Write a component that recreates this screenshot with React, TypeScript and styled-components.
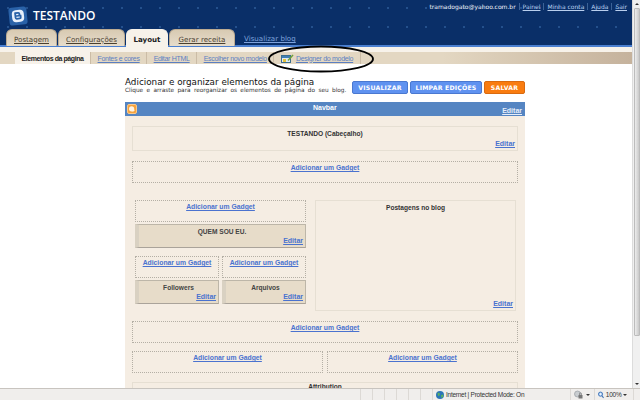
import React from 'react';
import styled, { createGlobalStyle } from 'styled-components';

const GlobalStyle = createGlobalStyle`
  html, body {
    margin: 0;
    padding: 0;
    width: 640px;
    height: 400px;
    overflow: hidden;
    background: #fff;
    font-family: 'Liberation Sans', Arial, sans-serif;
  }
`;

const Window = styled.div`
  width: 640px;
  height: 400px;
  position: relative;
  display: flex;
  flex-direction: column;
  overflow: hidden;
`;
const Body = styled.div`
  flex: 1;
  min-height: 0;
  display: flex;
`;
const Page = styled.div`
  flex: 1;
  min-width: 0;
  display: flex;
  flex-direction: column;
  overflow: hidden;
`;
const Header = styled.header`
  height: 45px;
  flex: none;
  position: relative;
  background-color: #0a2f68;
  background-image: radial-gradient(circle at 8px 8px, #24508c 1px, transparent 1.5px);
  background-size: 19px 19px;
  border-bottom: 2px solid #4a7fd0;
  display: flex;
  justify-content: space-between;
  align-items: flex-start;
`;
const Brand = styled.div`
  display: flex;
  align-items: center;
  gap: 5px;
  padding: 6px 0 0 8px;
  color: #fff;
  font: 600 12px 'Open Sans', sans-serif;
  line-height: 20px;
`;
const Account = styled.div`
  display: flex;
  align-items: center;
  gap: 3px;
  padding: 3px 5px 0 0;
  font: 6px 'DejaVu Sans', sans-serif;
  color: #eef2f8;
`;
const AccountLink = styled.a`
  color: #b9cfee;
  text-decoration: underline;
  padding-left: 3px;
  border-left: 1px solid #3c6297;
`;
const Tabs = styled.nav`
  position: absolute;
  left: 6px;
  bottom: -2px;
  display: flex;
  align-items: flex-end;
  gap: 1px;
`;
const Tab = styled.div<{ $w: number; $active?: boolean }>`
  width: ${p => p.$w}px;
  height: ${p => (p.$active ? 18 : 17)}px;
  box-sizing: border-box;
  padding-top: 2px;
  display: flex;
  align-items: center;
  justify-content: center;
  border-radius: 6px 6px 0 0;
  background: ${p => (p.$active ? '#f7f2ea' : 'linear-gradient(#d8cab2, #e6dccb)')};
  border: 1px solid ${p => (p.$active ? '#f7f2ea' : '#bcab92')};
  border-bottom: 0;
  margin-bottom: ${p => (p.$active ? 0 : 1)}px;
  color: ${p => (p.$active ? '#222' : '#4a4030')};
  font: ${p => (p.$active ? 'bold 7.1px' : '7.1px')} 'DejaVu Sans', sans-serif;
  text-decoration: ${p => (p.$active ? 'none' : 'underline')};
`;
const BlogLink = styled.a`
  margin: 0 0 4px 8px;
  color: #7fa3dd;
  font: 7.1px 'DejaVu Sans', sans-serif;
  text-decoration: underline;
`;
const SubWrap = styled.div`
  height: 17px;
  flex: none;
  background: #f7f2ea;
  display: flex;
  align-items: flex-end;
`;
const SubNav = styled.div`
  height: 12px;
  flex: 1;
  background: linear-gradient(90deg, #e3d7c2 0%, #e3d7c2 70%, #c5b29c 100%);
  display: flex;
  align-items: stretch;
  padding-left: 15px;
  font: 7px 'Liberation Sans', sans-serif;
`;
const SubItem = styled.div<{ $active?: boolean }>`
  display: flex;
  align-items: center;
  gap: 2px;
  padding: 0 6.5px;
  border-right: 1px solid #cbbca6;
  background: ${p => (p.$active ? '#f7f2ea' : 'transparent')};
  color: ${p => (p.$active ? '#222' : '#5b7fc2')};
  font-weight: ${p => (p.$active ? 'bold' : 'normal')};
  letter-spacing: ${p => (p.$active ? -0.42 : -0.3)}px;
  text-decoration: ${p => (p.$active ? 'none' : 'underline')};
`;
const Main = styled.main`
  width: 400px;
  margin-left: 125px;
  padding-top: 13px;
  display: flex;
  flex-direction: column;
`;
const TitleRow = styled.div`
  display: flex;
  justify-content: space-between;
  align-items: flex-end;
  margin-bottom: 8px;
`;
const Title = styled.h1`
  margin: 0;
  font: normal 8.8px/10px 'DejaVu Sans', sans-serif;
  color: #111;
`;
const Hint = styled.p`
  margin: 0;
  font: 5.8px/7px 'DejaVu Sans', sans-serif;
  word-spacing: 1.5px;
  color: #333;
`;
const Actions = styled.div`
  display: flex;
  gap: 2px;
`;
const Action = styled.button<{ $w: number; $orange?: boolean }>`
  width: ${p => p.$w}px;
  height: 13px;
  padding: 0;
  border: 1px solid ${p => (p.$orange ? '#d96a10' : '#4a78d0')};
  border-radius: 2px;
  background: ${p => (p.$orange ? '#f97c10' : '#5f92f0')};
  color: #fff;
  font: bold 6.2px 'DejaVu Sans', sans-serif;
  letter-spacing: 0.2px;
`;
const Navbar = styled.div`
  height: 14px;
  flex: none;
  position: relative;
  background: #5585c2;
  display: flex;
  align-items: center;
  justify-content: space-between;
  padding: 0 3px 0 2px;
  color: #fff;
  font: bold 7px 'Liberation Sans', sans-serif;
`;
const NavLabel = styled.span`
  position: absolute;
  left: 188px;
  top: 2px;
`;
const NavEdit = styled.a`
  color: #e6eefa;
  text-decoration: underline;
  padding-top: 2px;
`;
const Sheet = styled.div`
  background: #f5ede3;
  padding: 10px 7px 0;
  display: flex;
  flex-direction: column;
  flex: 1;
  font: bold 6.6px 'Liberation Sans', sans-serif;
  color: #333;
`;
const Plain = styled.div<{ $h: number; $pad?: number }>`
  height: ${p => p.$h}px;
  box-sizing: border-box;
  border: 1px solid #e6dfd3;
  display: flex;
  flex-direction: column;
  align-items: center;
  padding-top: ${p => p.$pad ?? 3}px;
`;
const Slot = styled.div<{ $h?: number; $top?: number }>`
  height: ${p => p.$h ?? 22}px;
  margin-top: ${p => p.$top ?? 0}px;
  box-sizing: border-box;
  border: 1px dotted #b4afa5;
  text-align: center;
  padding-top: 2px;
`;
const GadgetLink = styled.a`
  color: #4a72cf;
  font-size: 6.8px;
  text-decoration: underline;
`;
const Widget = styled.div`
  height: 24px;
  box-sizing: border-box;
  background: #e7dcc9;
  border: 1px solid #bdb6a8;
  border-left-width: 4px;
  border-left-color: #d9d1c2;
  border-bottom-color: #aaa39a;
  display: flex;
  flex-direction: column;
  align-items: center;
  padding-top: 3px;
  color: #444;
`;
const Edit = styled.a`
  margin-top: auto;
  align-self: flex-end;
  color: #4a72cf;
  font-size: 7px;
  text-decoration: underline;
  padding: 0 2px 3px 0;
`;
const Columns = styled.div`
  display: flex;
  gap: 9px;
  height: 111px;
  margin: 17px 2px 10px 3px;
`;
const Sidebar = styled.div`
  width: 171px;
  flex: none;
  display: flex;
  flex-direction: column;
  gap: 2px;
`;
const Pair = styled.div`
  display: grid;
  grid-template-columns: 84px 84px;
  justify-content: space-between;
  row-gap: 2px;
  margin-top: 6px;
`;
const Posts = styled.div`
  flex: 1;
  display: flex;
  flex-direction: column;
  align-items: center;
  border: 1px solid #e6dfd3;
  padding-top: 3px;
`;
const Split = styled.div`
  display: flex;
  justify-content: space-between;
  margin: 8px 0 9px;
`;
const Half = styled(Slot)`
  width: 191px;
`;
const ScrollBar = styled.div`
  width: 8px;
  flex: none;
  background: #f0f0f0;
  border-left: 1px solid #dcdcdc;
  box-sizing: border-box;
  display: flex;
  flex-direction: column;
  align-items: center;
`;
const ScrollArrow = styled.span<{ $down?: boolean }>`
  height: 0;
  width: 0;
  margin: ${p => (p.$down ? 'auto 0 3px' : '3px 0 3px')};
  border-left: 2px solid transparent;
  border-right: 2px solid transparent;
  border-top: ${p => (p.$down ? '2px solid #333' : '0')};
  border-bottom: ${p => (p.$down ? '0' : '2px solid #333')};
`;
const Thumb = styled.div`
  width: 6px;
  height: 328px;
  box-sizing: border-box;
  background: linear-gradient(90deg, #ececec, #c9c9c9);
  border: 1px solid #bcbcbc;
  border-radius: 1px;
`;
const Status = styled.footer`
  height: 12px;
  flex: none;
  box-sizing: border-box;
  background: #f0eeec;
  border-top: 1px solid #c8c4bf;
  display: flex;
  align-items: center;
  justify-content: flex-end;
  font: 6.5px 'Liberation Sans', sans-serif;
  letter-spacing: -0.25px;
  color: #333;
`;
const Cell = styled.span<{ $w: number }>`
  width: ${p => p.$w}px;
  box-sizing: border-box;
  display: flex;
  align-items: center;
  gap: 2px;
  height: 100%;
  padding-left: 3px;
  border-left: 1px solid #dcd9d5;
`;
const Caret = styled.span`
  width: 0;
  height: 0;
  margin-left: auto;
  margin-right: 4px;
  border-left: 2px solid transparent;
  border-right: 2px solid transparent;
  border-top: 2px solid #333;
`;
const Oval = styled.svg`
  position: absolute;
  left: 265px;
  top: 44px;
`;

const Logo = () => (
  <svg width="20" height="20" viewBox="0 0 20 20">
    <g transform="rotate(-6 10 10)">
      <rect x="1" y="1" width="18" height="18" rx="3" fill="#2a62a8" />
      <rect x="4" y="4" width="12" height="12" rx="4" fill="#e8f0fb" />
      <path d="M7 6h3.5a2 2 0 0 1 2 2v1h1v2.5a2 2 0 0 1-2 2H8.5A2 2 0 0 1 6.5 11.5V6.5z" fill="#2a62a8" />
      <path d="M8.3 8.4h2.3M8.3 11.2h3.4" stroke="#e8f0fb" strokeWidth="1.2" />
    </g>
  </svg>
);

const NavIcon = () => (
  <svg width="10" height="10" viewBox="0 0 10 10">
    <rect x="0.5" y="0.5" width="9" height="9" rx="1.5" fill="#f5a23c" stroke="#fbc98a" />
    <circle cx="4.6" cy="4.8" r="2.6" fill="#fff4e4" />
    <circle cx="6" cy="6.2" r="1.4" fill="#fff4e4" />
  </svg>
);

const DesignerIcon = () => (
  <svg width="13" height="9" viewBox="0 0 13 9">
    <rect x="0.5" y="1.5" width="9" height="7" fill="#dfeaf4" stroke="#3c6e8f" />
    <rect x="1" y="2" width="8" height="2" fill="#3f7fb5" />
    <rect x="2" y="5" width="3" height="3" fill="#e2c23a" />
    <path d="M7 6.5 12 1" stroke="#6fa03c" strokeWidth="1.5" />
  </svg>
);

const GlobeIcon = () => (
  <svg width="8" height="8" viewBox="0 0 8 8">
    <circle cx="4" cy="4" r="4" fill="#2c76b8" />
    <path d="M1.5 1.5 4 2.5 3.5 4.5 2 5ZM5 4 7.5 3.5 7 6 5.5 7Z" fill="#5db35a" />
  </svg>
);

const SecurityIcon = () => (
  <svg width="9" height="9" viewBox="0 0 9 9">
    <circle cx="3.5" cy="4" r="3" fill="#c9cdd0" stroke="#8f9498" strokeWidth="0.6" />
    <rect x="4.5" y="5" width="4" height="3.5" fill="#777" />
    <path d="M5.5 5V3.8a1 1 0 0 1 2 0V5" fill="none" stroke="#777" strokeWidth="0.7" />
  </svg>
);

const ZoomIcon = () => (
  <svg width="7" height="8" viewBox="0 0 7 8">
    <circle cx="3" cy="3" r="2.5" fill="#9cc2ee" stroke="#3a6fb4" />
    <path d="M1.6 3h2.8M3 1.6v2.8" stroke="#fff" strokeWidth="0.8" />
    <path d="M4.8 4.8 6.6 7.4" stroke="#3a6fb4" strokeWidth="1.2" />
  </svg>
);

const addGadget = <GadgetLink>Adicionar um Gadget</GadgetLink>;

export default function App() {
  return (
    <Window>
      <GlobalStyle />
      <Body>
        <Page>
          <Header>
            <Brand>
              <Logo />
              TESTANDO
            </Brand>
            <Account>
              tramadogato@yahoo.com.br
              <AccountLink>Painel</AccountLink>
              <AccountLink>Minha conta</AccountLink>
              <AccountLink>Ajuda</AccountLink>
              <AccountLink>Sair</AccountLink>
            </Account>
            <Tabs>
              <Tab $w={51}>Postagem</Tab>
              <Tab $w={67}>Configurações</Tab>
              <Tab $w={42} $active>Layout</Tab>
              <Tab $w={66}>Gerar receita</Tab>
              <BlogLink>Visualizar blog</BlogLink>
            </Tabs>
          </Header>
          <SubWrap>
            <SubNav>
              <SubItem $active>Elementos da página</SubItem>
              <SubItem>Fontes e cores</SubItem>
              <SubItem>Editar HTML</SubItem>
              <SubItem>Escolher novo modelo</SubItem>
              <SubItem>
                <DesignerIcon />
                Designer do modelo
              </SubItem>
            </SubNav>
          </SubWrap>
          <Main>
            <TitleRow>
              <div>
                <Title>Adicionar e organizar elementos da página</Title>
                <Hint>Clique e arraste para reorganizar os elementos de página do seu blog.</Hint>
              </div>
              <Actions>
                <Action $w={56}>VISUALIZAR</Action>
                <Action $w={72}>LIMPAR EDIÇÕES</Action>
                <Action $w={41} $orange>SALVAR</Action>
              </Actions>
            </TitleRow>
            <Navbar>
              <NavIcon />
              <NavLabel>Navbar</NavLabel>
              <NavEdit>Editar</NavEdit>
            </Navbar>
            <Sheet>
              <Plain $h={25}>
                TESTANDO (Cabeçalho)
                <Edit>Editar</Edit>
              </Plain>
              <Slot $top={10}>{addGadget}</Slot>
              <Columns>
                <Sidebar>
                  <Slot>{addGadget}</Slot>
                  <Widget>
                    QUEM SOU EU.
                    <Edit>Editar</Edit>
                  </Widget>
                  <Pair>
                    <Slot>{addGadget}</Slot>
                    <Slot>{addGadget}</Slot>
                    <Widget>
                      Followers
                      <Edit>Editar</Edit>
                    </Widget>
                    <Widget>
                      Arquivos
                      <Edit>Editar</Edit>
                    </Widget>
                  </Pair>
                </Sidebar>
                <Posts>
                  Postagens no blog
                  <Edit>Editar</Edit>
                </Posts>
              </Columns>
              <Slot>{addGadget}</Slot>
              <Split>
                <Half>{addGadget}</Half>
                <Half>{addGadget}</Half>
              </Split>
              <Plain $h={25} $pad={0}>Attribution</Plain>
            </Sheet>
          </Main>
        </Page>
        <ScrollBar>
          <ScrollArrow />
          <Thumb />
          <ScrollArrow $down />
        </ScrollBar>
      </Body>
      <Status>
        <Cell $w={12} />
        <Cell $w={12} />
        <Cell $w={12} />
        <Cell $w={12} />
        <Cell $w={12} />
        <Cell $w={12} />
        <Cell $w={138}>
          <GlobeIcon />
          Internet | Protected Mode: On
        </Cell>
        <Cell $w={24}>
          <SecurityIcon />
          <Caret />
        </Cell>
        <Cell $w={46}>
          <ZoomIcon />
          100%
          <Caret />
          <Cell $w={7} />
        </Cell>
      </Status>
      <Oval width="112" height="30" viewBox="0 0 112 30">
        <ellipse cx="56" cy="15" rx="52" ry="12.5" fill="none" stroke="#000" strokeWidth="1.8" />
      </Oval>
    </Window>
  );
}
